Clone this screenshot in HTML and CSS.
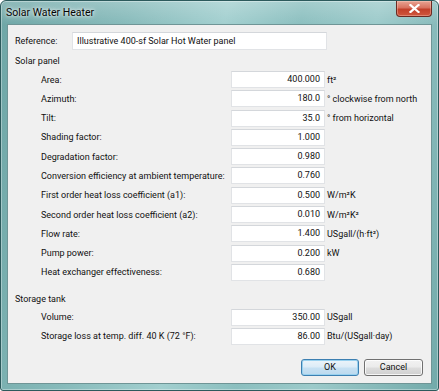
FILE: index.html
```html
<!DOCTYPE html>
<html>
<head>
<meta charset="utf-8">
<link rel="stylesheet" href="styles.css">
</head>
<body>
<div class="window">
  <div class="titlebar">
    <span class="title">Solar Water Heater</span>
    <div class="close"><svg width="11" height="9" viewBox="0 0 11 9"><path d="M1.5 1 L9.5 8 M9.5 1 L1.5 8" stroke="#ffffff" stroke-width="2.2" stroke-linecap="square"/></svg></div>
  </div>
  <div class="client">
    <div class="ref-row">
      <span class="ref-label">Reference:</span>
      <div class="textbox ref-box">Illustrative 400-sf Solar Hot Water panel</div>
    </div>
    <div class="group-title">Solar panel</div>
    <div class="fields solar">
      <span class="lbl">Area:</span><div class="textbox num">400.000</div><span class="unit">ft²</span>
      <span class="lbl">Azimuth:</span><div class="textbox num">180.0</div><span class="unit">° clockwise from north</span>
      <span class="lbl">Tilt:</span><div class="textbox num">35.0</div><span class="unit">° from horizontal</span>
      <span class="lbl">Shading factor:</span><div class="textbox num">1.000</div><span class="unit"></span>
      <span class="lbl">Degradation factor:</span><div class="textbox num">0.980</div><span class="unit"></span>
      <span class="lbl">Conversion efficiency at ambient temperature:</span><div class="textbox num">0.760</div><span class="unit"></span>
      <span class="lbl">First order heat loss coefficient (a1):</span><div class="textbox num">0.500</div><span class="unit">W/m²K</span>
      <span class="lbl">Second order heat loss coefficient (a2):</span><div class="textbox num">0.010</div><span class="unit">W/m²K²</span>
      <span class="lbl">Flow rate:</span><div class="textbox num">1.400</div><span class="unit">USgall/(h·ft²)</span>
      <span class="lbl">Pump power:</span><div class="textbox num">0.200</div><span class="unit">kW</span>
      <span class="lbl">Heat exchanger effectiveness:</span><div class="textbox num">0.680</div><span class="unit"></span>
    </div>
    <div class="group-title storage-title">Storage tank</div>
    <div class="fields storage">
      <span class="lbl">Volume:</span><div class="textbox num">350.00</div><span class="unit">USgall</span>
      <span class="lbl">Storage loss at temp. diff. 40 K (72 °F):</span><div class="textbox num">86.00</div><span class="unit">Btu/(USgall·day)</span>
    </div>
    <div class="buttons">
      <div class="btn btn-ok">OK</div>
      <div class="btn">Cancel</div>
    </div>
  </div>
</div>
</body>
</html>
```
FILE: styles.css
```css
html, body {
  margin: 0;
  padding: 0;
  background: #ffffff;
}
body {
  width: 439px;
  height: 391px;
  overflow: hidden;
  font-family: Roboto, "Liberation Sans", sans-serif;
  font-size: 9px;
  color: #111111;
}
.window {
  box-sizing: border-box;
  width: 439px;
  height: 391px;
  border: 1px solid #2c5a5c;
  border-radius: 6px 6px 3px 3px;
  padding: 0 6px 6px 6px;
  display: flex;
  flex-direction: column;
  background:
    linear-gradient(to bottom, rgba(255,255,255,0.22), rgba(255,255,255,0) 24px),
    linear-gradient(100deg, #6ea6a6 0%, #86baba 25%, #a2cfcf 45%, #8bbfbf 60%, #9ccaca 75%, #72aaaa 100%);
  box-shadow: inset 0 0 0 1px rgba(255,255,255,0.35);
}
.titlebar {
  height: 23px;
  display: flex;
  align-items: flex-start;
  flex-shrink: 0;
}
.title {
  font-size: 10.5px;
  color: #050505;
  margin-top: 5px;
  margin-left: -1px;
  text-shadow: 0 0 6px rgba(255,255,255,0.9), 0 0 3px rgba(255,255,255,0.9);
}
.close {
  margin-left: auto;
  margin-right: 0;
  width: 36px;
  height: 16px;
  box-sizing: border-box;
  border: 1px solid #6b2a22;
  border-top: none;
  border-radius: 0 0 4px 4px;
  background: linear-gradient(to bottom, #e8a493 0%, #d8725f 45%, #c2402a 55%, #d0583e 100%);
  display: flex;
  align-items: center;
  justify-content: center;
  box-shadow: inset 0 0 0 1px rgba(255,220,210,0.35);
}
.client {
  flex: 1;
  background: #f0f0f0;
  border: 1px solid #6f9596;
  padding: 7px 7px 7px 7px;
  display: flex;
  flex-direction: column;
}
.ref-row {
  display: flex;
  align-items: center;
  height: 18px;
}
.ref-label {
  width: 57px;
}
.textbox {
  box-sizing: border-box;
  background: #ffffff;
  border: 1px solid #e1e3e6;
  border-top-color: #d4d7db;
  height: 17px;
  line-height: 15px;
  white-space: nowrap;
}
.ref-box {
  width: 255px;
  height: 18px;
  line-height: 16px;
  padding-left: 4px;
}
.group-title {
  height: 12px;
  line-height: 12px;
  margin-top: 5px;
  margin-bottom: 4px;
}
.storage-title {
  margin-top: 12px;
}
.fields {
  display: grid;
  grid-template-columns: 190px 94px auto;
  grid-auto-rows: 17px;
  row-gap: 2.3px;
  padding-left: 26px;
  align-items: center;
}
.fields.storage {
  row-gap: 2px;
}
.lbl {
  white-space: nowrap;
}
.num {
  text-align: right;
  padding-right: 4px;
}
.unit {
  padding-left: 2px;
  white-space: nowrap;
}
.buttons {
  margin-top: 14px;
  display: flex;
  justify-content: flex-end;
  gap: 5px;
  padding-right: 1px;
}
.btn {
  box-sizing: border-box;
  width: 59px;
  height: 17px;
  line-height: 15px;
  text-align: center;
  border: 1px solid #707070;
  border-radius: 3px;
  background: linear-gradient(to bottom, #f2f2f2 0%, #ebebeb 48%, #dddddd 52%, #cfcfcf 100%);
  box-shadow: inset 0 0 0 1px rgba(255,255,255,0.8);
}
.btn-ok {
  width: 58px;
  border-color: #3c7fb1;
  background: linear-gradient(to bottom, #ecf4fa 0%, #dcecf7 48%, #c7e1f3 52%, #bcd9ee 100%);
  box-shadow: inset 0 0 0 1px #98d1ef;
}
```
